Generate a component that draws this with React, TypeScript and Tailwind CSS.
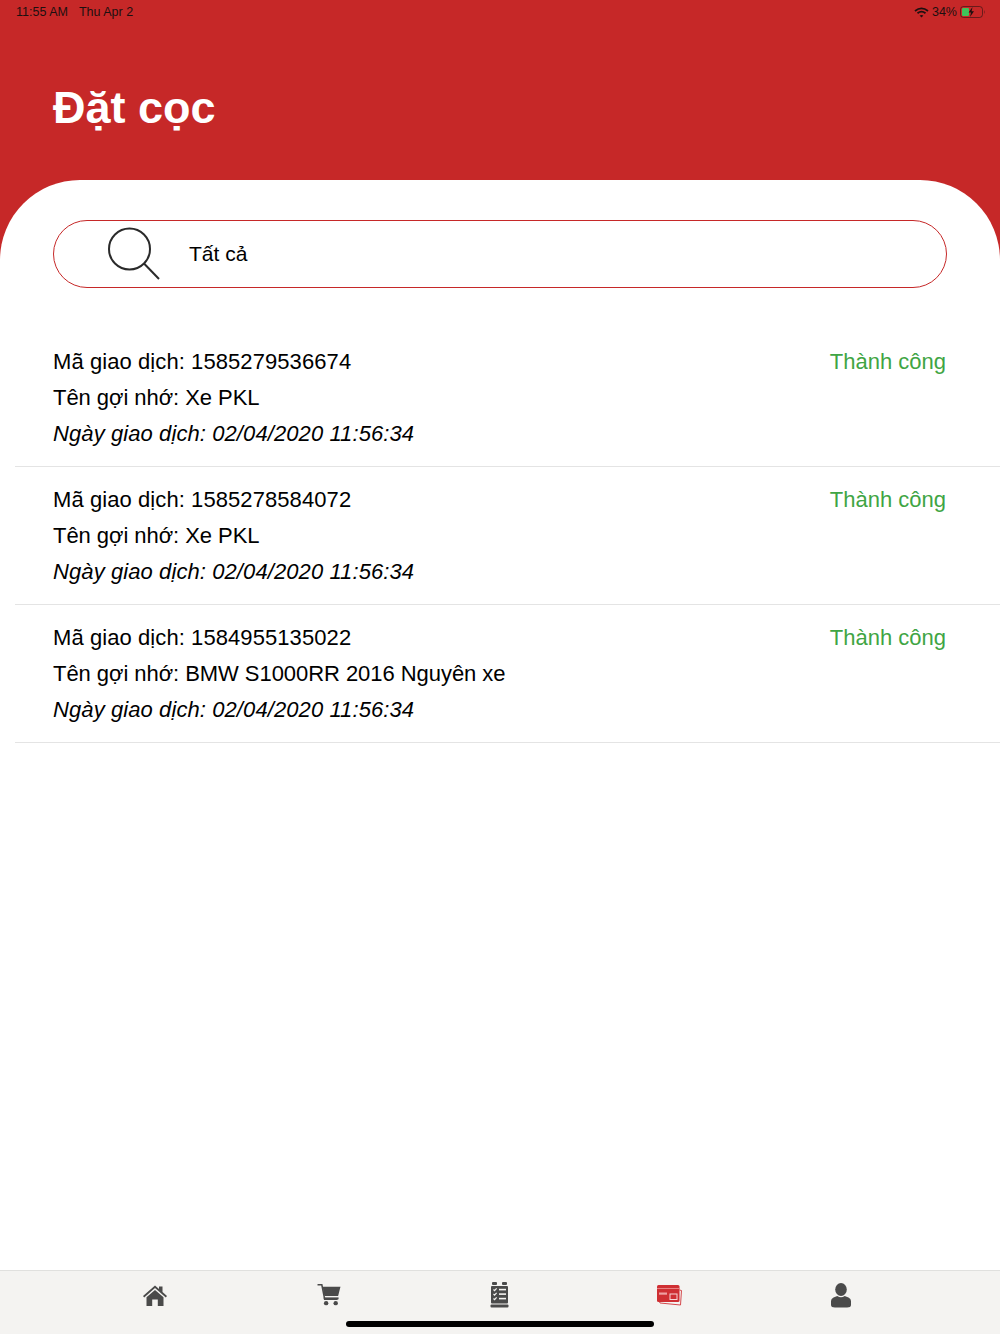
const font = { fontFamily: '"Liberation Sans", Arial, sans-serif' }

const transactions = [
  { code: '1585279536674', name: 'Xe PKL' },
  { code: '1585278584072', name: 'Xe PKL' },
  { code: '1584955135022', name: 'BMW S1000RR 2016 Nguyên xe' },
]

const StatusBar = () => (
  <div className="h-[24px] pl-4 pr-[14px] flex items-center justify-between text-[12.5px] leading-none text-[#1c1010]">
    <div className="flex gap-[11px]">
      <span>11:55 AM</span>
      <span>Thu Apr 2</span>
    </div>
    <div className="flex items-center gap-[3px]">
      <svg width="15" height="11" viewBox="0 0 15 11" fill="none" stroke="#1c1010" strokeWidth="1.8">
        <path d="M1 4 Q7.5 -1.2 14 4" />
        <path d="M3.5 6.3 Q7.5 3 11.5 6.3" />
        <path d="M7.5 10.6 L5.6 8.6 Q7.5 7.2 9.4 8.6 Z" fill="#1c1010" stroke="none" />
      </svg>
      <span>34%</span>
      <svg width="26" height="12" viewBox="0 0 26 12">
        <rect x="0.5" y="0.5" width="22" height="11" rx="3" fill="none" stroke="#1c1010" strokeOpacity="0.55" />
        <rect x="2" y="2" width="7" height="8" rx="1" fill="#3fc35a" />
        <path d="M12.5 1 L8.6 6.6 H11 L10 11 L14 5.2 H11.6 Z" fill="#1c1010" />
        <path d="M24 4 Q25.4 6 24 8 Z" fill="#1c1010" fillOpacity="0.6" />
      </svg>
    </div>
  </div>
)

const SearchIcon = () => (
  <svg width="54" height="54" viewBox="0 0 54 54" fill="none" stroke="#2a2a2a" className="shrink-0">
    <circle cx="21.5" cy="22" r="20.5" strokeWidth="2" />
    <path d="M36 36.5 L51 52" strokeWidth="2" />
  </svg>
)

const TransactionRow = ({ code, name }: { code: string; name: string }) => (
  <div className="ml-[15px] pl-[38px] pr-[54px] pt-[15px] pb-[14px] border-b border-[#e4e4e4] flex justify-between text-[22px] leading-[36px]">
    <div className="text-black">
      <p className="tracking-[0.08px]">Mã giao dịch: {code}</p>
      <p className="tracking-[-0.05px]">Tên gợi nhớ: {name}</p>
      <p className="italic tracking-[0.09px]">Ngày giao dịch: 02/04/2020 11:56:34</p>
    </div>
    <span className="text-[#3fa544]">Thành công</span>
  </div>
)

const HomeIcon = () => (
  <svg width="24" height="21" viewBox="0 0 24 21" fill="#4a4a4a">
    <path d="M12 0.5 L16 4 V1.5 H19.5 V7 L24 11 L22.8 12.4 L12 3 L1.2 12.4 L0 11 Z" />
    <path d="M12 5 L20.5 12.2 V21 H14.8 V14.5 H9.2 V21 H3.5 V12.2 Z" />
  </svg>
)

const CartIcon = () => (
  <svg width="24" height="22" viewBox="0 0 25 23" fill="#4a4a4a">
    <path d="M0.5 0.8 H5 L8 16 H21.5" fill="none" stroke="#4a4a4a" strokeWidth="1.6" />
    <path d="M5.8 3 H24.5 L22 12.5 H7.6 Z" />
    <rect x="7" y="14" width="15.5" height="2" />
    <circle cx="9.5" cy="20" r="2.3" />
    <circle cx="19.5" cy="20" r="2.3" />
  </svg>
)

const ListIcon = () => (
  <svg width="19" height="26" viewBox="0 0 19 26">
    <rect x="2" y="0" width="5" height="3" rx="1" fill="#4a4a4a" />
    <rect x="12" y="0" width="5" height="3" rx="1" fill="#4a4a4a" />
    <rect x="1" y="4" width="17" height="17.5" rx="1" fill="#4a4a4a" />
    <rect x="0.5" y="22.5" width="18" height="3" rx="1" fill="#4a4a4a" />
    <g stroke="#f4f3f1" strokeWidth="1.2" fill="none">
      <path d="M3.5 7.5 L4.6 8.6 L6.6 6.4" />
      <path d="M3.5 12 L4.6 13.1 L6.6 10.9" />
      <path d="M3.5 16.5 L4.6 17.6 L6.6 15.4" />
      <path d="M9 7.6 H16" strokeWidth="1.6" />
      <path d="M9 12.1 H16" strokeWidth="1.6" />
      <path d="M9 16.6 H16" strokeWidth="1.6" />
    </g>
  </svg>
)

const CardIcon = () => (
  <svg width="25" height="21" viewBox="0 0 25 21">
    <path d="M2 15.5 L3 18 L23.5 20 L24.5 5.5 L22.5 5" fill="none" stroke="#d4494d" strokeWidth="1" />
    <rect x="0" y="0" width="22.5" height="17" rx="1.5" fill="#cf2f33" />
    <rect x="0" y="3" width="22.5" height="1" fill="#e98082" />
    <rect x="2" y="7.5" width="8" height="2.2" fill="#eea0a2" />
    <rect x="13" y="9" width="7" height="5.5" fill="none" stroke="#f7d5d5" strokeWidth="1" />
  </svg>
)

const UserIcon = () => (
  <svg width="20" height="25" viewBox="0 0 20 25" fill="#4a4a4a">
    <ellipse cx="10" cy="6.5" rx="5.8" ry="6.5" />
    <path d="M6.3 13 Q10 15.5 13.7 13 L17.5 14.5 Q20 15.6 20 18 V22 Q20 24.5 16 24.5 H4 Q0 24.5 0 22 V18 Q0 15.6 2.5 14.5 Z" />
  </svg>
)

const TabBar = () => (
  <div className="relative h-[64px] bg-[#f4f3f1] border-t border-[#e0e0de]">
    <div className="h-[48px] pl-[143px] flex items-center">
      <div className="w-[174px]"><HomeIcon /></div>
      <div className="w-[173px]"><CartIcon /></div>
      <div className="w-[167px]"><ListIcon /></div>
      <div className="w-[174px]"><CardIcon /></div>
      <UserIcon />
    </div>
    <div className="absolute left-[346px] bottom-[7px] w-[308px] h-[6px] rounded-full bg-black" />
  </div>
)

export default function App() {
  return (
    <div className="h-[1334px] bg-[#c62828] flex flex-col overflow-hidden" style={font}>
      <div className="h-[180px] shrink-0">
        <StatusBar />
        <h1 className="pl-[53px] pt-[55px] text-[45px] leading-[58px] font-bold text-white">Đặt cọc</h1>
      </div>
      <div className="flex-1 bg-white rounded-t-[80px] pt-[40px]">
        <div className="mx-[53px] h-[68px] border border-[#c62828] rounded-full flex items-center pl-[54px] gap-[27px] text-[21px] text-black">
          <SearchIcon />
          <span>Tất cả</span>
        </div>
        <div className="mt-[41px]">
          {transactions.map((t) => (
            <TransactionRow key={t.code} code={t.code} name={t.name} />
          ))}
        </div>
      </div>
      <TabBar />
    </div>
  )
}
